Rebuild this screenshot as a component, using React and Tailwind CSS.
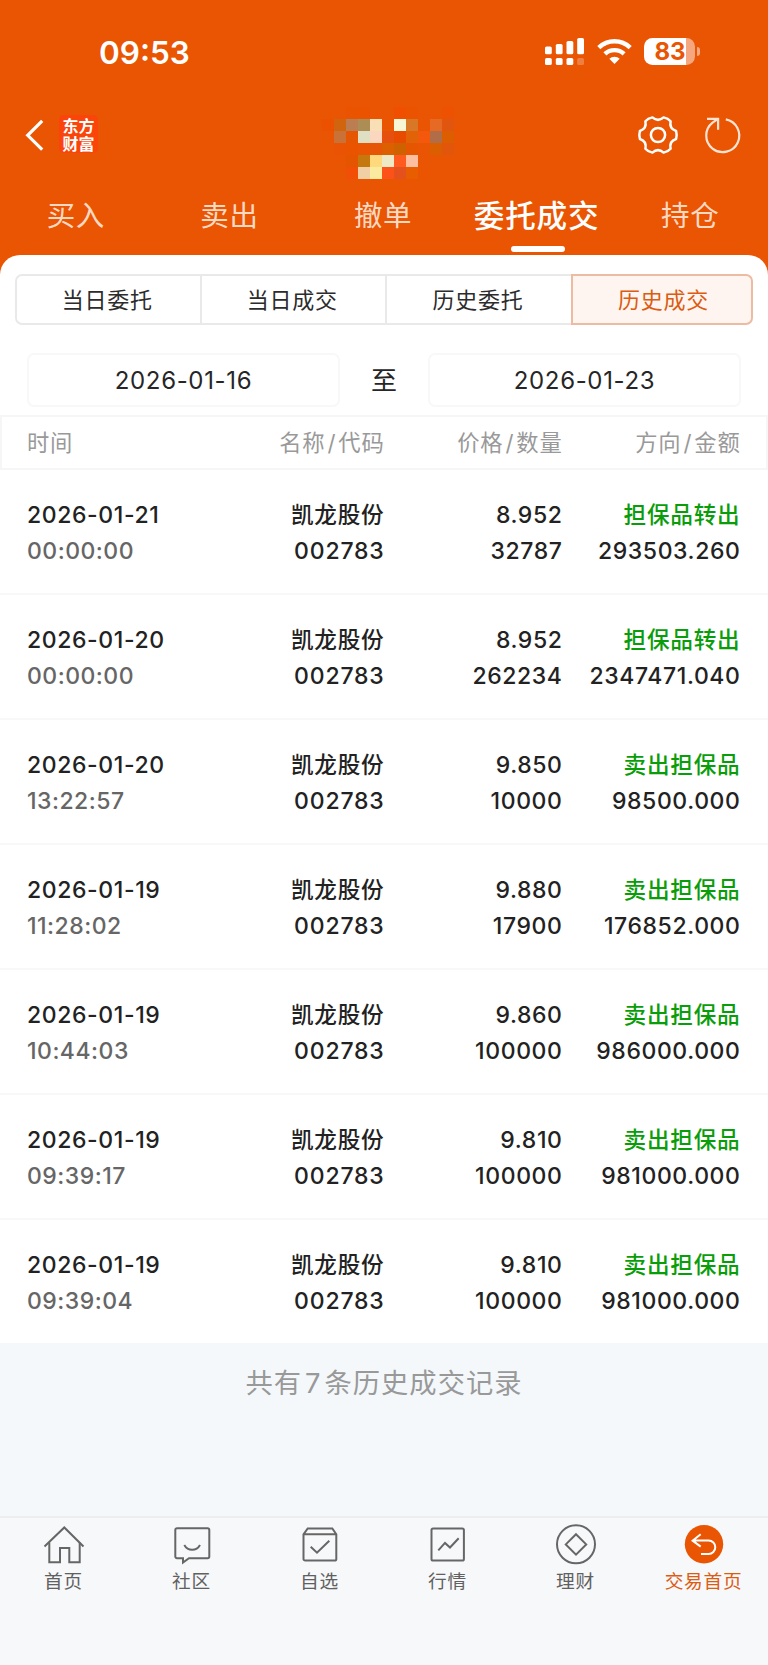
const mosaic = [
  ['', '', '#ea5401', '#eb5301', '', '', '#f04e00', '#eb5301', '', '', '#ec5201', ''],
  ['#ec5101', '#d0640f', '#bb7d52', '#ad8d56', '#f9dfb5', '', '#f7f6d5', '#d87726', '', '#e66a24', '#e0560f', ''],
  ['', '#c97137', '#e65501', '#dedfc3', '#fbd7bf', '#e5500f', '#e84a00', '#e26208', '#f4580c', '#b16d48', '#dc5e00', ''],
  ['', '#ea5304', '#ea5401', '', '#e55707', '#dc5f00', '#cf6200', '#e65501', '', '#db5f00', '#e2560c', ''],
  ['', '', '#e55500', '#c4780d', '#ffd97c', '#ede8c5', '#ff5b20', '#fdbf9f', '', '', '', ''],
  ['', '', '#f14e08', '#f0cfa4', '#fbeba0', '#fc521a', '#e5511d', '#e85d00', '#eb5401', '', '', ''],
];

const tabs = ['买入', '卖出', '撤单', '委托成交', '持仓'];
const segments = ['当日委托', '当日成交', '历史委托', '历史成交'];

const records = [
  { date: '2026-01-21', time: '00:00:00', price: '8.952', qty: '32787', side: '担保品转出', amount: '293503.260' },
  { date: '2026-01-20', time: '00:00:00', price: '8.952', qty: '262234', side: '担保品转出', amount: '2347471.040' },
  { date: '2026-01-20', time: '13:22:57', price: '9.850', qty: '10000', side: '卖出担保品', amount: '98500.000' },
  { date: '2026-01-19', time: '11:28:02', price: '9.880', qty: '17900', side: '卖出担保品', amount: '176852.000' },
  { date: '2026-01-19', time: '10:44:03', price: '9.860', qty: '100000', side: '卖出担保品', amount: '986000.000' },
  { date: '2026-01-19', time: '09:39:17', price: '9.810', qty: '100000', side: '卖出担保品', amount: '981000.000' },
  { date: '2026-01-19', time: '09:39:04', price: '9.810', qty: '100000', side: '卖出担保品', amount: '981000.000' },
];

const navItems = [
  {
    label: '首页',
    icon: (
      <>
        <path d="M2.5 24.5 22.3 5.5l19.2 19" />
        <path d="M7.3 20.5v19.8H18V26h9.3v14.3h10.4V20.5" />
      </>
    ),
  },
  {
    label: '社区',
    icon: (
      <>
        <path d="M7 6.2h30.6a1.7 1.7 0 0 1 1.7 1.7v26.7a1.7 1.7 0 0 1-1.7 1.7H19l-6 4.2v-4.2H7a1.7 1.7 0 0 1-1.7-1.7V7.9A1.7 1.7 0 0 1 7 6.2z" />
        <path d="M14.3 23c3.6 6.4 12.1 6.4 15.7 0" />
      </>
    ),
  },
  {
    label: '自选',
    icon: (
      <>
        <path d="M5.5 12.3 9.7 6.4h24.6l4 5.9v24.6a1.7 1.7 0 0 1-1.7 1.7H7.2a1.7 1.7 0 0 1-1.7-1.7zh32.8" />
        <path d="m12.7 24.7 6.3 6 12.3-12" />
      </>
    ),
  },
  {
    label: '行情',
    icon: (
      <>
        <rect x="5.5" y="6.4" width="32.4" height="32.2" rx="1.6" />
        <path d="m12.3 28.3 6.7-7.4 5 4.6 8.7-9.2" />
      </>
    ),
  },
  {
    label: '理财',
    icon: (
      <>
        <circle cx="22" cy="22.3" r="19" />
        <path d="M22 12.2 32.2 22.4 22 32.6 11.8 22.4z" />
      </>
    ),
  },
  {
    label: '交易首页',
    active: true,
    icon: (
      <>
        <circle cx="22" cy="22.2" r="19.2" fill="#e95502" stroke="none" />
        <path d="M18.7 12.2 10.6 18.6l8.1 6M10.6 18.6h16a6.7 6.7 0 0 1 0 13.4h-7.6" stroke="#fff" />
      </>
    ),
  },
];

function StatusBar() {
  return (
    <div className="flex h-[105px] items-start justify-between pr-[68px] pl-[99px]">
      <div className="mt-[33px] text-[31.5px] leading-[40px] font-semibold">09:53</div>
      <div className="mt-[38px] flex h-[27px] items-start">
        <svg width="40" height="27" viewBox="0 0 40 27" fill="#fff">
          <rect x="0" y="8.5" width="6.8" height="7.8" rx="1.6" />
          <rect x="10.8" y="6" width="6.8" height="10.3" rx="1.6" />
          <rect x="21.5" y="3" width="6.8" height="13.3" rx="1.6" />
          <rect x="32.2" y="0" width="6.8" height="16.3" rx="1.6" />
          <rect x="0" y="20" width="6.8" height="7" rx="1.6" />
          <rect x="10.8" y="20" width="6.8" height="7" rx="1.6" />
          <rect x="21.5" y="20" width="6.8" height="7" rx="1.6" />
          <rect x="32.2" y="20" width="6.8" height="7" rx="1.6" opacity=".25" />
        </svg>
        <svg className="ml-[12px]" width="35" height="27" viewBox="0 0 35 27" fill="none" stroke="#fff" strokeWidth="4.4">
          <path d="M1.8 9.6a22.6 22.6 0 0 1 31.4 0" />
          <path d="M7.9 15.9a14 14 0 0 1 19.2 0" />
          <path d="m17.5 26-5.2-5.3a7.6 7.6 0 0 1 10.4 0z" fill="#fff" stroke="none" />
        </svg>
        <div className="ml-[12px] flex h-[27px] w-[51px] items-center overflow-hidden rounded-[8.5px] bg-linear-to-r from-white from-83% to-[#f5a77f] to-83%">
          <span className="w-full pl-[1px] text-center text-[24px] leading-[27px] font-bold text-[#e95502]">83</span>
        </div>
        <div className="mt-[9px] ml-[2px] h-[9px] w-[3px] rounded-r-full bg-[#f5a77f]" />
      </div>
    </div>
  );
}

function TitleBar() {
  return (
    <div className="flex h-[86px] items-start">
      <svg className="mt-[13px] ml-[24px]" width="22" height="34" viewBox="0 0 22 34" fill="none" stroke="#fff" strokeWidth="3.2">
        <path d="M18.2 2.8 3.7 17.3l14.5 14.4" />
      </svg>
      <div className="mt-[10px] ml-[13px] flex h-[38px] w-[39px] flex-col items-center justify-center rounded-[5px] bg-[#fa440a] pt-[1px] text-[16px] leading-[18px] font-bold">
        <span>东方</span>
        <span>财富</span>
      </div>
      <div className="mt-[2px] ml-[224px] grid grid-cols-[repeat(12,12px)]">
        {mosaic.flat().map((color, i) => (
          <div key={i} className="h-[12px] w-[12px]" style={{ backgroundColor: color || 'transparent' }} />
        ))}
      </div>
      <svg className="mt-[9px] ml-[171px]" width="42" height="42" viewBox="-21 -21 42 42" fill="none" stroke="#fff" strokeWidth="2.5" strokeLinejoin="round">
        <path d="M18.1-4Q19.2 0 18.1 4Q11 6.3 12.6 13.7Q10 16.7 5.6 17.6Q0 12.6-5.6 17.6Q-10 16.7-12.6 13.7Q-11 6.3-18.1 4Q-19.2 0-18.1-4Q-11-6.3-12.6-13.7Q-10-16.7-5.6-17.6Q0-12.6 5.6-17.6Q10-16.7 12.6-13.7Q11-6.3 18.1-4z" />
        <circle r="7.1" />
      </svg>
      <svg className="mt-[11px] ml-[24px]" width="40" height="40" viewBox="0 0 40 40" fill="none" stroke="#fde3d3" strokeWidth="2.2">
        <path d="M22.8 3.4A16.5 16.5 0 1 1 9.6 6.6L15 2.9" />
        <path d="M4 2.8h11.1v10.9" />
      </svg>
    </div>
  );
}

function TopTabs() {
  return (
    <div className="grid h-[64px] grid-cols-5">
      {tabs.map((tab, i) => (
        <div key={tab} className="flex flex-col items-center">
          {i === 3 ? (
            <>
              <span className="mt-[5px] mr-[2px] text-[30.6px] leading-[40px] font-medium whitespace-nowrap tracking-[0.8px]">{tab}</span>
              <span className="mt-[10px] h-[6px] w-[54px] rounded-full bg-white" />
            </>
          ) : (
            <span className="mt-[5px] mr-[2px] text-[28.5px] leading-[40px] font-normal tracking-[0.6px] text-[#fdd9c2]">{tab}</span>
          )}
        </div>
      ))}
    </div>
  );
}

function Filters() {
  return (
    <div className="px-[15px] pt-[19px]">
      <div className="grid h-[51px] grid-cols-[184.5px_185.5px_186px_182px]">
        {segments.map((name, i) => (
          <div
            key={name}
            className={`flex items-center justify-center border-2 pt-[1px] text-[22px] tracking-[0.8px] ${
              i === 3
                ? 'rounded-r-[7px] border-[#ecbba2] bg-[#fef5f0] pl-[3px] text-[#dc5c12]'
                : 'border-r-0 border-[#e9e9e9] pr-[2px] text-[#2c2c2c] first:rounded-l-[7px]'
            }`}
          >
            {name}
          </div>
        ))}
      </div>
      <div className="mt-[28px] flex h-[54px] items-center justify-between px-[12px]">
        <div className="flex h-full w-[313px] items-center justify-center rounded-[7px] border-2 border-[#f8f8f8] pt-[1px] text-[24px] tracking-[0.65px] text-[#262626]">2026-01-16</div>
        <div className="pt-[1px] text-[26px] text-[#262626]">至</div>
        <div className="flex h-full w-[313px] items-center justify-center rounded-[7px] border-2 border-[#f8f8f8] pt-[1px] text-[24px] tracking-[0.65px] text-[#262626]">2026-01-23</div>
      </div>
    </div>
  );
}

function RecordTable() {
  return (
    <div>
      <div className="mt-[8px] grid h-[55px] grid-cols-[157px_200.5px_178px_178px] items-center border-2 border-[#f6f6f6] pl-[25px] text-right text-[22.3px] tracking-[0.8px] text-[#999]">
        <span className="text-left">时间</span>
        <span>名称<span className="mx-[2px]">/</span>代码</span>
        <span>价格<span className="mx-[2px]">/</span>数量</span>
        <span>方向<span className="mx-[2px]">/</span>金额</span>
      </div>
      {records.map((r, i) => (
        <div
          key={i}
          className="grid h-[125px] grid-cols-[157px_200.5px_178px_178px] border-b-2 border-[#f8f8f8] pt-[27px] pl-[27px] text-right text-[23px] leading-[36px] font-[550] tracking-[0.6px] text-[#222] last:h-[123px] last:border-b-0"
        >
          <div className="text-left">
            <div>{r.date}</div>
            <div className="font-medium tracking-[0.5px] text-[#666]">{r.time}</div>
          </div>
          <div>
            <div className="text-[22.6px] font-medium tracking-[0.8px]">凯龙股份</div>
            <div className="tracking-[0.8px]">002783</div>
          </div>
          <div>
            <div>{r.price}</div>
            <div>{r.qty}</div>
          </div>
          <div>
            <div className="text-[22.6px] font-medium tracking-[0.8px] text-[#0a9d0a]">{r.side}</div>
            <div>{r.amount}</div>
          </div>
        </div>
      ))}
    </div>
  );
}

function BottomNav() {
  return (
    <div className="grid h-[149px] grid-cols-6 border-t-2 border-[#eceeef] bg-[#f7f8fa]">
      {navItems.map((item) => (
        <div key={item.label} className={`flex flex-col items-center ${item.active ? 'text-[#dc5c12]' : 'text-[#606060]'}`}>
          <svg className="mt-[4px]" width="44" height="44" viewBox="0 0 44 44" fill="none" stroke="#666" strokeWidth="2">
            {item.icon}
          </svg>
          <span className="mt-[3px] mr-[1px] text-[18.7px] leading-[26px] tracking-[0.7px]">{item.label}</span>
        </div>
      ))}
    </div>
  );
}

export default function App() {
  return (
    <div className="flex h-[1665px] w-[768px] flex-col overflow-hidden bg-[#f4f8fa] font-['Inter','Noto_Sans_CJK_SC',sans-serif]">
      <div className="h-[275px] shrink-0 bg-[#e95502] text-white">
        <StatusBar />
        <TitleBar />
        <TopTabs />
      </div>
      <div className="relative -mt-[20px] shrink-0 rounded-t-[20px] bg-white">
        <Filters />
        <RecordTable />
      </div>
      <div className="mt-[21px] flex-1 text-center text-[27.3px] leading-[40px] tracking-[1px] text-[#999]">
        共有<span className="mx-[3px]">7</span>条历史成交记录
      </div>
      <BottomNav />
    </div>
  );
}
